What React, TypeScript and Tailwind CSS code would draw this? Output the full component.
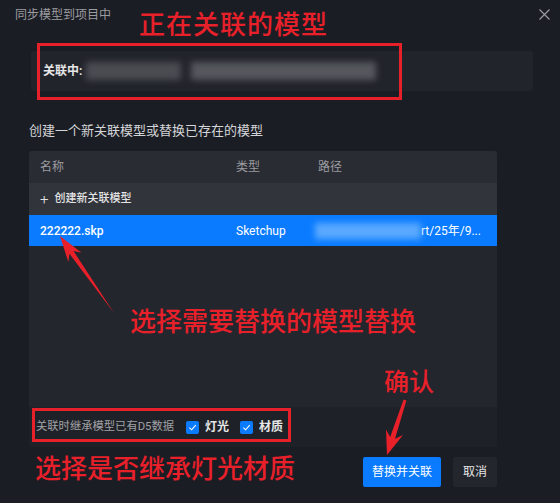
import React from 'react';

const RedBox: React.FC<{ className: string }> = ({ className }) => (
  <div className={`absolute border-[3px] border-[#e8202a] ${className}`} />
);

const Check: React.FC = () => (
  <span className="w-[13px] h-[13px] rounded-[2px] bg-[#0a7bff] flex items-center justify-center">
    <svg width="9" height="9" viewBox="0 0 10 10" fill="none">
      <path d="M1.5 5.2 L4 7.6 L8.6 2.4" stroke="white" strokeWidth="1.2" />
    </svg>
  </span>
);

const App: React.FC = () => {
  return (
    <div className="relative w-[560px] h-[503px] overflow-hidden bg-[#1b1d24] font-['Roboto','Noto_Sans_CJK_SC',sans-serif]">
      {/* title bar */}
      <div className="h-[30px] flex items-center justify-between pl-[15px] pr-[10px]">
        <span className="text-[12px] text-[#9b9ca0]">同步模型到项目中</span>
        <svg width="11" height="11" viewBox="0 0 11 11" className="mt-[-1px]">
          <path d="M0.5 0.5 L10.5 10.5 M10.5 0.5 L0.5 10.5" stroke="#9a9ba0" strokeWidth="1.2" />
        </svg>
      </div>

      {/* current link */}
      <div className="mt-[21px] ml-[31px] mr-[27px] h-[40px] rounded-[3px] bg-[#22242b] flex items-center pl-[12px]">
        <span className="text-[12px] font-bold text-[#e6e6e6]">关联中:</span>
        <div className="ml-[4px] flex items-center gap-[10px] blur-[3px]">
          <div className="w-[95px] h-[18px] bg-[#4a4c52]" />
          <div className="w-[185px] h-[18px] bg-[#55575d]" />
        </div>
      </div>

      <div className="mt-[30px] ml-[29px] h-[20px] flex items-center text-[13px] text-[#d4d5d8]">
        创建一个新关联模型或替换已存在的模型
      </div>

      {/* table */}
      <div className="mt-[10px] ml-[29px] w-[468px] h-[296px] rounded-[3px] overflow-hidden flex flex-col bg-[#23262d]">
        <div className="h-[32px] shrink-0 bg-[#2a2c33] flex items-center text-[12px] text-[#9a9ba0]">
          <span className="pl-[11px] w-[207px]">名称</span>
          <span className="w-[82px]">类型</span>
          <span>路径</span>
        </div>
        <div className="h-[32px] shrink-0 bg-[#32343b] flex items-center pl-[11px] text-[11px] font-medium text-[#e4e4e6]">
          <span className="text-[15px] font-light leading-none mr-[6px]">+</span>
          创建新关联模型
        </div>
        <div className="h-[31px] shrink-0 bg-[#0a7bff] flex items-center text-[12px] text-white">
          <span className="pl-[11px] w-[207px] font-medium">222222.skp</span>
          <span className="w-[79px]">Sketchup</span>
          <div className="w-[106px] h-[16px] bg-[#5aa9ff] blur-[3px]" />
          <span className="">rt/25年/9...</span>
        </div>
        <div className="flex-1" />
        <div className="h-[40px] shrink-0 bg-[#1f2128] flex items-center pl-[7px] text-[11.3px]">
          <span className="text-[#a0a1a5]">关联时继承模型已有D5数据</span>
          <span className="ml-[12px]"><Check /></span>
          <span className="ml-[6px] text-[12px] font-bold text-[#e6e6e6]">灯光</span>
          <span className="ml-[11px]"><Check /></span>
          <span className="ml-[6px] text-[12px] font-bold text-[#e6e6e6]">材质</span>
        </div>
      </div>

      {/* buttons */}
      <div className="mt-[10px] w-[497px] flex justify-end gap-[12px]">
        <button className="w-[78px] h-[30px] rounded-[2px] bg-[#0a7bff] text-[12px] text-white">替换并关联</button>
        <button className="w-[44px] h-[30px] rounded-[2px] bg-[#24262d] text-[12px] text-[#e6e6e6]">取消</button>
      </div>

      {/* annotations */}
      <RedBox className="left-[37px] top-[43px] w-[365px] h-[57px]" />
      <RedBox className="left-[32px] top-[408px] w-[259px] h-[34px]" />
      <div className="absolute left-[139px] top-[6px] text-[26px] leading-[34px] tracking-[1px] font-medium text-[#e8202a] font-['Noto_Sans_CJK_SC',sans-serif]">正在关联的模型</div>
      <div className="absolute left-[130px] top-[303px] text-[26px] leading-[34px] font-medium text-[#e8202a] font-['Noto_Sans_CJK_SC',sans-serif]">选择需要替换的模型替换</div>
      <div className="absolute left-[35px] top-[450px] text-[26px] leading-[34px] font-medium text-[#e8202a] font-['Noto_Sans_CJK_SC',sans-serif]">选择是否继承灯光材质</div>
      <div className="absolute left-[384px] top-[364px] text-[25px] leading-[32px] font-medium text-[#e8202a] font-['Noto_Sans_CJK_SC',sans-serif]">确认</div>
      <svg className="absolute left-0 top-0" width="560" height="503" viewBox="0 0 560 503">
        <polygon points="60,236 81.5,252.7 73.5,251 114,313 69.5,253.8 68.3,261.9" fill="#e8202a" />
        <polygon points="387,455 386,429.4 390.2,437.1 403.6,399.5 406.4,400.5 395,438.7 403,435" fill="#e8202a" />
      </svg>
    </div>
  );
};

export default App;
